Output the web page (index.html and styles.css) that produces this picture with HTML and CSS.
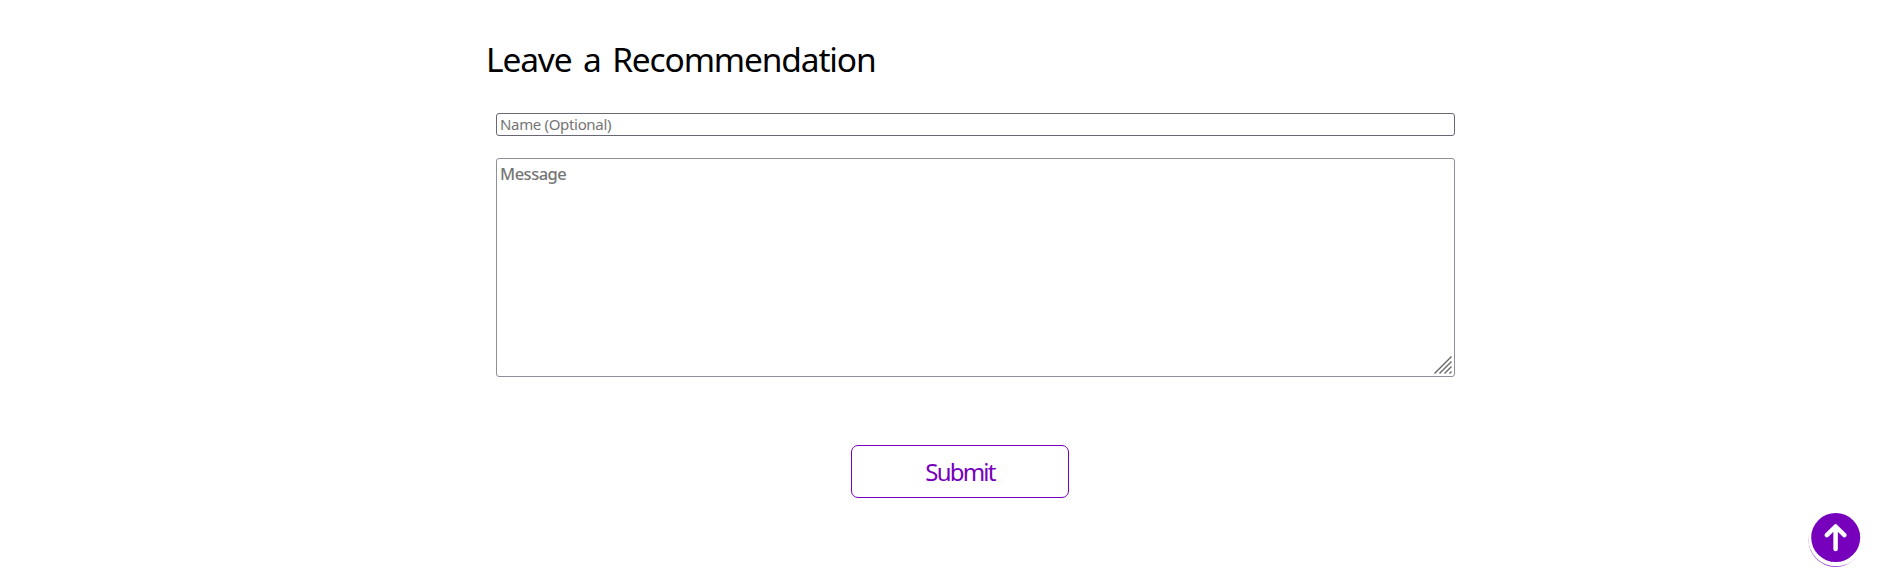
FILE: index.html
```html
<!DOCTYPE html>
<html lang="en">
<head>
<meta charset="utf-8">
<title>Leave a Recommendation</title>
<link rel="stylesheet" href="styles.css">
</head>
<body>
<main class="recommend">
  <h2 class="title">Leave a Recommendation</h2>
  <form class="form">
    <input class="field name" type="text" placeholder="Name (Optional)">
    <div class="message-wrap">
      <textarea class="field message" placeholder="Message"></textarea>
      <svg class="grip" viewBox="0 0 18 18"><path d="M.5 17.5 17.5.5M5.5 17.5l12-12M10.5 17.5l7-7M15.5 17.5l2-2"/></svg>
    </div>
    <button class="submit" type="button">Submit</button>
  </form>
</main>
<a class="to-top" href="#" aria-label="Back to top">
  <svg viewBox="0 0 60 60">
    <circle class="shade" cx="28.5" cy="27" r="27"/>
    <circle class="ring" cx="29.1" cy="25.5" r="27.8"/>
    <circle class="disc" cx="28.7" cy="24.5" r="24.5"/>
    <path class="arrow" d="M28.6 36V13.5M19.8 22.2l8.8-8.7 8.8 8.7"/>
  </svg>
</a>
</body>
</html>
```
FILE: styles.css
```css
body {
  margin: 0;
  height: 581px;
  overflow: hidden;
  background: #fff;
  font-family: "Trebuchet MS", "Noto Sans", sans-serif;
}
.recommend {
  width: 972px;
  margin-left: 486px;
  padding-top: 34px;
}
.title {
  margin: 0;
  height: 79px;
  font-size: 33.5px;
  line-height: 50px;
  font-weight: 400;
  letter-spacing: -1.15px;
  word-spacing: 4px;
  white-space: nowrap;
  color: #000;
}
.form {
  display: flex;
  flex-direction: column;
  padding-left: 10px;
}
.field {
  display: block;
  box-sizing: border-box;
  width: 959px;
  margin: 0;
  border: 1px solid #8f8f9d;
  border-radius: 3px;
  background: #fff;
  font-family: inherit;
  resize: none;
}
.field::placeholder {
  color: #757575;
  opacity: 1;
}
.name {
  height: 23px;
  padding: 0 3px 1px;
  border-color: #686775;
  font-size: 15px;
  letter-spacing: -0.33px;
}
.message-wrap {
  position: relative;
  width: 959px;
  margin-top: 22px;
}
.message {
  height: 219px;
  padding: 4px 3px;
  font-size: 16.5px;
  line-height: 22px;
  letter-spacing: -0.5px;
}
.message::placeholder {
  font-weight: 500;
}
.grip {
  position: absolute;
  right: 3px;
  bottom: 3px;
  width: 18px;
  height: 18px;
  fill: none;
  stroke: #666;
  stroke-width: 1.4;
}
.submit {
  width: 218px;
  height: 53px;
  margin: 68px 0 0 355px;
  padding: 0;
  border: 1px solid #7600bc;
  border-radius: 7px;
  background: #fff;
  color: #7600bc;
  font: 24px "Noto Sans", sans-serif;
  letter-spacing: -1.8px;
}
.to-top {
  position: fixed;
  left: 1807px;
  top: 513px;
  width: 60px;
  height: 60px;
}
.to-top svg { display: block; }
.shade, .disc { fill: #7600bc; }
.shade { opacity: .8; }
.ring { fill: #fff; }
.arrow {
  fill: none;
  stroke: #fff;
  stroke-width: 4.5;
  stroke-linecap: round;
  stroke-linejoin: round;
}
```
